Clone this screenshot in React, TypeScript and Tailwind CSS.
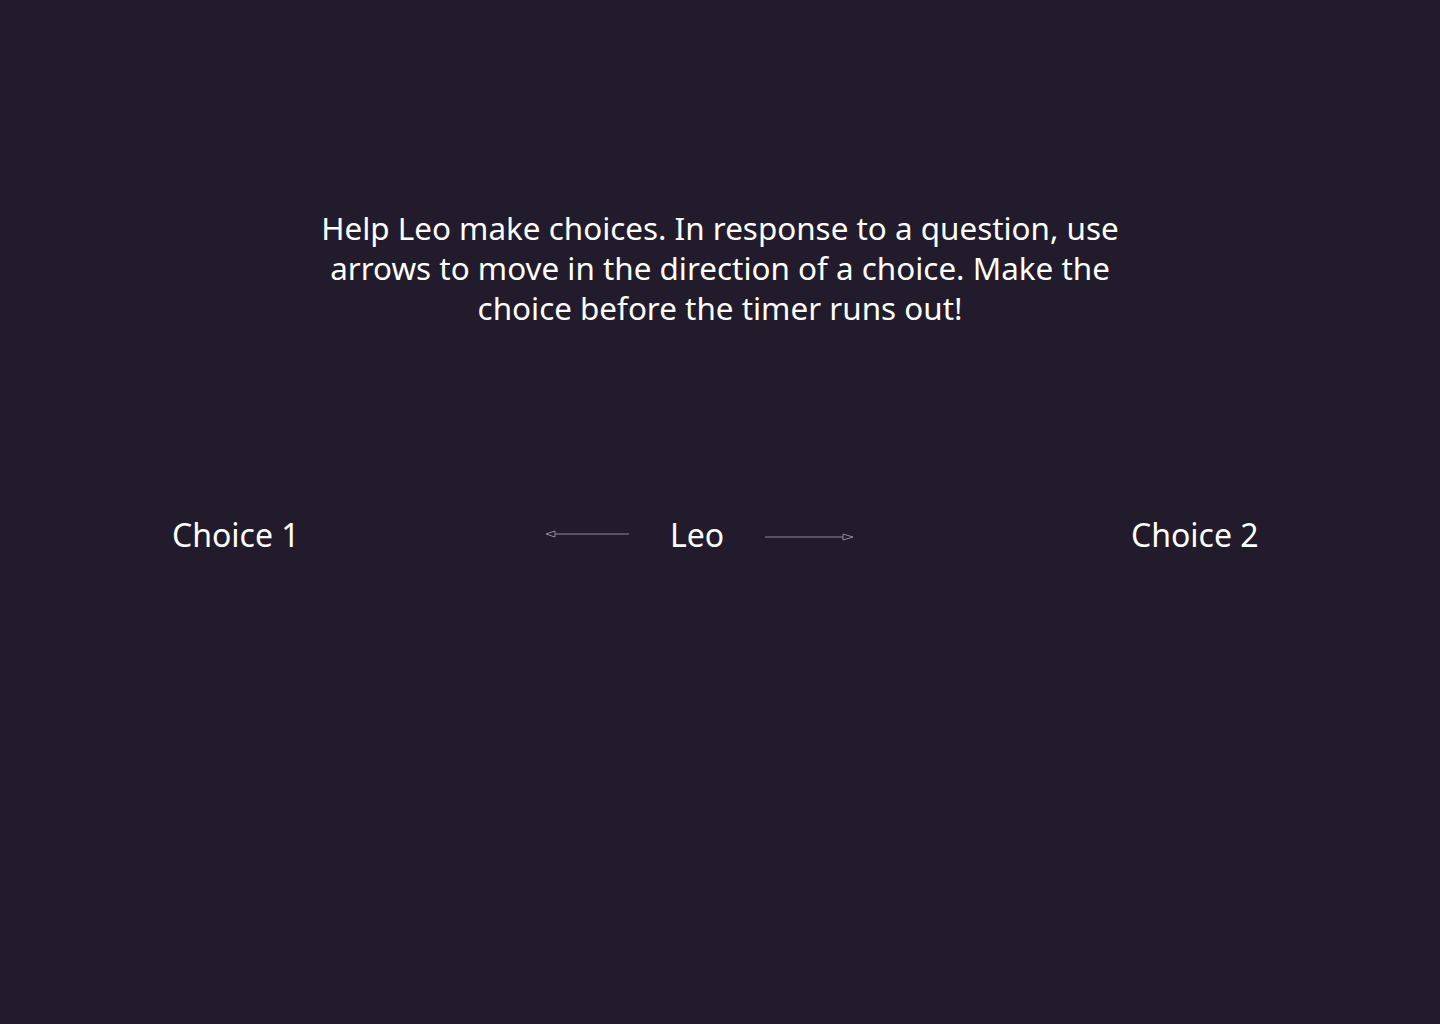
function Arrow({ dir }: { dir: "left" | "right" }) {
  return (
    <svg width="90" height="10" viewBox="0 0 90 10" className="block">
      {dir === "left" ? (
        <>
          <line x1="10" y1="5" x2="84" y2="5" stroke="#8f8b97" strokeWidth="1" />
          <polygon points="1,5 10,2 10,8" fill="none" stroke="#8f8b97" strokeWidth="1" />
        </>
      ) : (
        <>
          <line x1="1" y1="5" x2="79" y2="5" stroke="#8f8b97" strokeWidth="1" />
          <polygon points="89,5 79,2 79,8" fill="none" stroke="#8f8b97" strokeWidth="1" />
        </>
      )}
    </svg>
  );
}

export default function App() {
  return (
    <div
      className="w-[1440px] h-[1024px] bg-[#211b2b] text-white overflow-hidden"
      style={{ fontFamily: '"Noto Sans", "Open Sans", sans-serif' }}
    >
      <div className="pt-[208px] flex justify-center">
        <p className="w-[860px] text-center text-[31.4px] leading-[40px]">
          Help Leo make choices. In response to a question, use arrows to move in the direction of a
          choice. Make the choice before the timer runs out!
        </p>
      </div>

      <div className="mt-[187px] flex items-center pl-[172px] text-[32px] leading-[40px]">
        <span className="w-[373px]">Choice 1</span>
        <div className="w-[125px] -mt-[2px]">
          <Arrow dir="left" />
        </div>
        <span className="w-[94px]">Leo</span>
        <div className="w-[367px] mt-[4px]">
          <Arrow dir="right" />
        </div>
        <span>Choice 2</span>
      </div>
    </div>
  );
}
